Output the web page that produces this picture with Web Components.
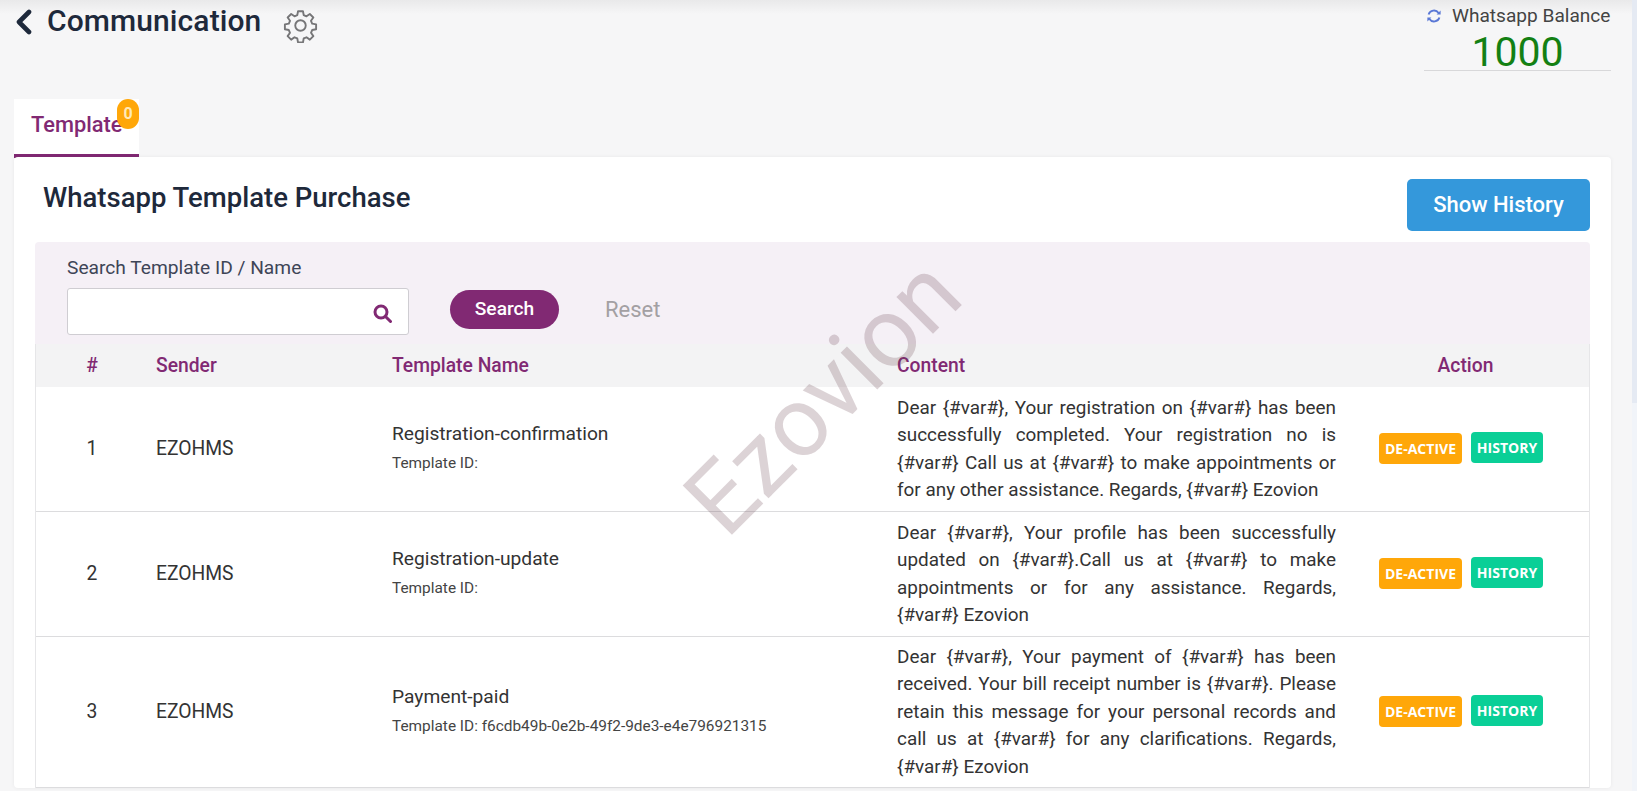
<!DOCTYPE html>
<html>
<head>
<meta charset="utf-8">
<title>Communication</title>
<style>
  html, body { margin: 0; height: 100%; overflow: hidden; }
  body { background: #f6f6f7; font-family: Roboto, "Liberation Sans", sans-serif; color: #333; }
  .scrolltrack { position: fixed; top: 0; right: 0; bottom: 0; width: 5px; background: #f1f4f9; }
  .scrolltrack i { display: block; height: 403px; background: #e5eaf3; }
</style>
</head>
<body>
<comm-page></comm-page>
<div class="scrolltrack"><i></i></div>

<script>
class PageHeader extends HTMLElement {
  constructor() {
    super();
    this.attachShadow({ mode: "open" });
    this.shadowRoot.innerHTML = `
      <style>
        :host { display: flex; justify-content: space-between; height: 99px; padding: 0 26px 0 15px; background: linear-gradient(#e9e9ea, #f6f6f7 14px); }
        .left { display: flex; align-items: flex-start; }
        .back { margin-top: 9px; width: 17px; height: 26px; }
        h1 { margin: 3px 0 0 15px; font-size: 30px; line-height: 36px; font-weight: 500; color: #1e293b; letter-spacing: .1px; }
        .gear { margin: 8px 0 0 22px; width: 35px; height: 35px; }
        .balance { width: 187px; height: 71px; border-bottom: 1px solid #d8d8da; box-sizing: border-box; }
        .label { display: flex; align-items: center; height: 31px; font-size: 19.1px; color: #444; white-space: nowrap; }
        .label svg { margin: 0 10px 0 2px; width: 16px; height: 16px; }
        .num { font-size: 41px; line-height: 40px; color: #138013; text-align: center; margin-top: 1px; }
      </style>
      <div class="left">
        <svg class="back" viewBox="0 0 17 26"><path d="M14 3 L4 13 L14 23" fill="none" stroke="#1e293b" stroke-width="4.6" stroke-linecap="round" stroke-linejoin="round"/></svg>
        <h1>Communication</h1>
        <svg class="gear" viewBox="0 0 24 24" fill="none" stroke="#767678" stroke-width="1.3" stroke-linejoin="round"><circle cx="12" cy="12" r="3.6"/><path d="M10.3 2.2h3.4l.5 2.7 1.9.8 2.3-1.6 2.4 2.4-1.6 2.3.8 1.9 2.7.5v3.4l-2.7.5-.8 1.9 1.6 2.3-2.4 2.4-2.3-1.6-1.9.8-.5 2.7h-3.4l-.5-2.7-1.9-.8-2.3 1.6-2.4-2.4 1.6-2.3-.8-1.9-2.7-.5v-3.4l2.7-.5.8-1.9-1.6-2.3 2.4-2.4 2.3 1.6 1.9-.8z"/></svg>
      </div>
      <div class="balance">
        <div class="label">
          <svg viewBox="0 0 16 16" fill="none" stroke="#5a78d6" stroke-width="1.9"><path d="M2.6 6.6A5.6 5.6 0 0 1 12.6 5"/><path d="M13.4 9.4A5.6 5.6 0 0 1 3.4 11"/><path d="M14.6 2.6v4h-4z" fill="#5a78d6" stroke="none"/><path d="M1.4 13.4v-4h4z" fill="#5a78d6" stroke="none"/></svg>
          Whatsapp Balance
        </div>
        <div class="num">1000</div>
      </div>`;
  }
}
customElements.define("page-header", PageHeader);

class TabBar extends HTMLElement {
  constructor() {
    super();
    this.attachShadow({ mode: "open" });
    this.shadowRoot.innerHTML = `
      <style>
        :host { display: block; height: 59px; padding-left: 14px; }
        .tab { position: relative; width: 125px; height: 59px; box-sizing: border-box; background: #fff; border-bottom: 4px solid #812973; color: #812973; font-size: 21.8px; font-weight: 500; line-height: 52px; padding-left: 17px; white-space: nowrap; }
        .badge { position: absolute; top: 0; right: 0; width: 22px; height: 30px; border-radius: 11px; background: #ffa709; color: #ffe9b8; font-size: 16px; font-weight: 700; line-height: 30px; text-align: center; }
      </style>
      <div class="tab"><slot></slot><span class="badge">0</span></div>`;
  }
}
customElements.define("tab-bar", TabBar);

class SearchPanel extends HTMLElement {
  constructor() {
    super();
    this.attachShadow({ mode: "open" });
    this.shadowRoot.innerHTML = `
      <style>
        :host { display: block; height: 102px; box-sizing: border-box; padding: 14px 0 0 32px; background: #f5f0f6; border-radius: 4px 4px 0 0; }
        label { display: block; font-size: 19.2px; line-height: 24px; color: #3e4557; }
        .row { display: flex; align-items: flex-start; margin-top: 8px; }
        .input { display: flex; align-items: center; justify-content: flex-end; width: 342px; height: 47px; box-sizing: border-box; padding-right: 16px; background: #fff; border: 1px solid #cfcdd2; border-radius: 3px; }
        .input svg { width: 19px; height: 19px; margin-top: 3px; }
        .go { margin: 2px 0 0 41px; width: 109px; height: 39px; border-radius: 20px; background: #812973; color: #fff; font-size: 19.2px; font-weight: 500; line-height: 37px; text-align: center; }
        .reset { margin: 2px 0 0 46px; font-size: 22px; line-height: 39px; color: #a3a0a3; }
      </style>
      <label>Search Template ID / Name</label>
      <div class="row">
        <div class="input"><svg viewBox="0 0 19 19" fill="none" stroke="#812973" stroke-width="3"><circle cx="8" cy="8" r="6"/><path d="M12.5 12.5L17.5 17.5" stroke-linecap="round"/></svg></div>
        <div class="go">Search</div>
        <div class="reset">Reset</div>
      </div>`;
  }
}
customElements.define("search-panel", SearchPanel);

class TemplateTable extends HTMLElement {
  constructor() {
    super();
    this.attachShadow({ mode: "open" });
    this.shadowRoot.innerHTML = `
      <style>
        :host { display: block; border-left: 1px solid #e6e6e8; border-right: 1px solid #e6e6e8; }
        .head { display: grid; grid-template-columns: 120px 236px 505px 439px 1fr; align-items: center; height: 43px; background: #f3f3f4; color: #812973; font-size: 19.3px; font-weight: 500; }
        .head span:first-child { text-align: center; padding-right: 8px; }
        .head span:last-child { text-align: center; padding-left: 6px; }
      </style>
      <div class="head"><span>#</span><span>Sender</span><span>Template Name</span><span>Content</span><span>Action</span></div>
      <slot></slot>`;
  }
}
customElements.define("template-table", TemplateTable);

class TemplateRow extends HTMLElement {
  constructor() {
    super();
    this.attachShadow({ mode: "open" });
    this.shadowRoot.innerHTML = `
      <style>
        :host { display: grid; grid-template-columns: 120px 236px 505px 439px 1fr; align-items: center; box-sizing: border-box; background: #fff; border-bottom: 1px solid #dcdcde; color: #333; font-size: 19.3px; }
        .num { text-align: center; padding: 0 8px 2px 0; }
        .sender { padding-bottom: 2px; }
        .who { padding-bottom: 3px; }
        .name { font-size: 19.2px; line-height: 24px; }
        .tid { font-size: 15.4px; line-height: 20px; margin-top: 7px; color: #444; }
        .content { font-size: 18.9px; line-height: 27.5px; text-align: justify; padding: 4px 0 5px; }
        .actions { display: flex; align-items: center; justify-content: flex-start; gap: 9px; padding: 0 0 2px 43px; }
        .badge { font-family: "Open Sans", sans-serif; font-size: 14px; font-weight: 700; color: #fff; height: 31px; line-height: 31px; border-radius: 4px; text-align: center; }
        .de { width: 83px; background: #ffa709; margin-top: 1px; }
        .hi { width: 72px; background: #0acf97; margin-top: -1px; }
      </style>
      <div class="num"></div>
      <div class="sender">EZOHMS</div>
      <div class="who"><div class="name"></div><div class="tid"></div></div>
      <div class="content"><slot></slot></div>
      <div class="actions"><span class="badge de">DE-ACTIVE</span><span class="badge hi">HISTORY</span></div>`;
  }
  connectedCallback() {
    const root = this.shadowRoot;
    root.querySelector(".num").textContent = this.getAttribute("num");
    root.querySelector(".name").textContent = this.getAttribute("name");
    root.querySelector(".tid").textContent = "Template ID: " + (this.getAttribute("tid") || "");
  }
}
customElements.define("template-row", TemplateRow);

class PurchaseCard extends HTMLElement {
  constructor() {
    super();
    this.attachShadow({ mode: "open" });
    this.shadowRoot.innerHTML = `
      <style>
        :host { display: block; position: relative; margin: -1px 26px 0 14px; padding: 0 21px 0 21px; background: #fff; border-radius: 4px; box-shadow: 0 0 4px rgba(0,0,0,.06); }
        .top { display: flex; justify-content: space-between; height: 85px; }
        h2 { margin: 24px 0 0 8px; font-size: 27.5px; line-height: 34px; font-weight: 500; color: #1e293b; }
        .hist { margin-top: 22px; width: 183px; height: 52px; border-radius: 5px; background: #3498db; color: #fff; font-size: 22px; font-weight: 500; line-height: 52px; text-align: center; }
        .mark { position: absolute; left: 639px; top: 190px; transform: rotate(-45deg); transform-origin: center; font-size: 98px; line-height: 100px; font-weight: 400; color: rgba(110,70,82,.24); pointer-events: none; }
      </style>
      <div class="top"><h2>Whatsapp Template Purchase</h2><div class="hist">Show History</div></div>
      <slot></slot>
      <div class="mark">Ezovion</div>`;
  }
}
customElements.define("purchase-card", PurchaseCard);

class CommPage extends HTMLElement {
  constructor() {
    super();
    this.attachShadow({ mode: "open" });
    this.shadowRoot.innerHTML = `
      <style>:host { display: block; }</style>
      <page-header></page-header>
      <tab-bar>Template</tab-bar>
      <purchase-card>
        <search-panel></search-panel>
        <template-table>
          <template-row num="1" name="Registration-confirmation" style="height:125px">Dear {#var#}, Your registration on {#var#} has been successfully completed. Your registration no is {#var#} Call us at {#var#} to make appointments or for any other assistance. Regards, {#var#} Ezovion</template-row>
          <template-row num="2" name="Registration-update" style="height:125px">Dear {#var#}, Your profile has been successfully updated on {#var#}.Call us at {#var#} to make appointments or for any assistance. Regards, {#var#} Ezovion</template-row>
          <template-row num="3" name="Payment-paid" tid="f6cdb49b-0e2b-49f2-9de3-e4e796921315" style="height:151px">Dear {#var#}, Your payment of {#var#} has been received. Your bill receipt number is {#var#}. Please retain this message for your personal records and call us at {#var#} for any clarifications. Regards, {#var#} Ezovion</template-row>
        </template-table>
      </purchase-card>`;
  }
}
customElements.define("comm-page", CommPage);
</script>
</body>
</html>
